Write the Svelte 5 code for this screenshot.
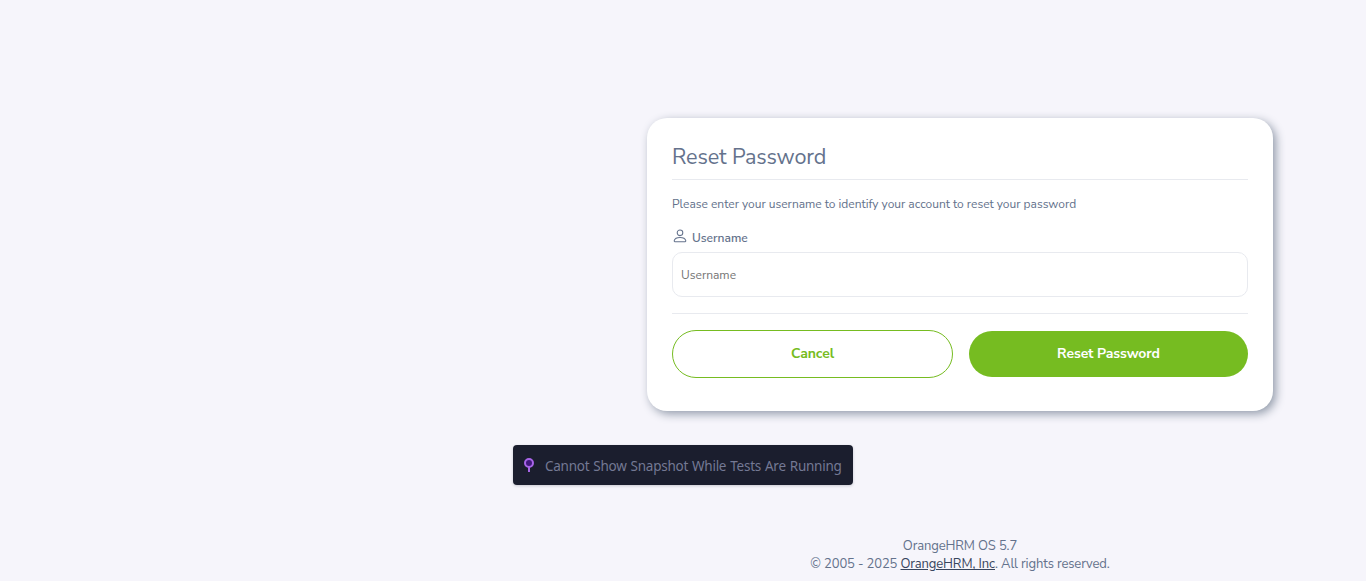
<script>
  let username = $state('');
</script>

<main class="page">
  <section class="card">
    <h1>Reset Password</h1>
    <form onsubmit={(e) => e.preventDefault()}>
      <p class="note">Please enter your username to identify your account to reset your password</p>
      <label for="username">
        <svg width="14" height="14" viewBox="0 0 14 14" fill="none" stroke="#64728c" stroke-width="1.05">
          <circle cx="7" cy="3.8" r="2.8" />
          <path d="M1.9 12.7C1.3 12.7 1.1 12.2 1.3 11.4 1.8 9.3 3.8 8.4 7 8.4s5.2.9 5.7 3c.2.8 0 1.3-.6 1.3Z" />
        </svg>
        <span>Username</span>
      </label>
      <input id="username" placeholder="Username" bind:value={username} />
      <div class="actions">
        <button type="button" class="cancel">Cancel</button>
        <button type="submit" class="reset">Reset Password</button>
      </div>
    </form>
  </section>
  <footer>
    <p>OrangeHRM OS 5.7</p>
    <p>© 2005 - 2025 <a href="#home">OrangeHRM, Inc</a>. All rights reserved.</p>
  </footer>
  <div class="toast">
    <svg width="12" height="16" viewBox="0 0 12 16">
      <path d="M6 9v6" stroke="#a865e8" stroke-width="2" />
      <circle cx="6" cy="6" r="4" fill="#41187d" stroke="#a865e8" stroke-width="2" />
    </svg>
    <span>Cannot Show Snapshot While Tests Are Running</span>
  </div>
</main>

<style>
  :global(body) { background: #f6f5fb; }
  .page {
    box-sizing: border-box;
    height: 581px;
    padding: 118px 93px 0 647px;
    overflow: hidden;
    display: flex;
    flex-direction: column;
    font-family: "Nunito Sans", Nunito, "Open Sans", sans-serif;
    color: #64728c;
  }
  .card {
    box-sizing: border-box;
    width: 626px;
    height: 293px;
    padding: 24px 25px;
    border-radius: 20px;
    background: #fff;
    box-shadow: 3px 3px 10px #929baa;
  }
  h1 {
    box-sizing: border-box;
    height: 38px;
    margin: 0;
    border-bottom: 1px solid #e8eaef;
    font-size: 21.6px;
    font-weight: 400;
    letter-spacing: -0.13px;
    line-height: 30px;
  }
  .note { margin: 16px 0 0; font-size: 12px; line-height: 16px; letter-spacing: -0.015px; }
  label {
    display: flex;
    gap: 5px;
    height: 20px;
    margin-top: 17px;
    padding-left: 1px;
    font-size: 12px;
    font-weight: 600;
    line-height: 18px;
  }
  svg { flex-shrink: 0; }
  input {
    display: block;
    box-sizing: border-box;
    width: 576px;
    height: 45px;
    margin: 3px 0 16px;
    padding: 0 8px;
    border: 1px solid #e8eaef;
    border-radius: 10px;
    outline: 0;
    background: #fff;
    color: #64728c;
    font: 400 12px "Nunito Sans", Nunito, "Open Sans", sans-serif;
  }
  input::placeholder { color: #757575; opacity: 1; }
  .actions {
    display: flex;
    align-items: center;
    gap: 16px;
    padding-top: 16px;
    border-top: 1px solid #e8eaef;
  }
  button {
    box-sizing: border-box;
    padding: 0 0 2px;
    border-radius: 24px;
    font: 700 14px "Nunito Sans", Nunito, "Open Sans", sans-serif;
    letter-spacing: -0.1px;
  }
  .cancel { width: 281px; height: 48px; border: 1px solid #76bc21; background: #fff; color: #76bc21; }
  .reset { width: 279px; height: 46px; border: 0; background: #76bc21; color: #fff; }
  footer { margin-top: 126px; text-align: center; font-size: 13px; line-height: 18px; letter-spacing: -0.125px; }
  footer p { margin: 0; white-space: nowrap; }
  a { color: #38455d; text-decoration: underline; }
  .toast {
    position: absolute;
    left: 513px;
    top: 445px;
    box-sizing: border-box;
    display: flex;
    align-items: center;
    gap: 10px;
    width: 340px;
    height: 40px;
    padding: 0 0 0 10px;
    border-radius: 4px;
    background: #1b1e2e;
    color: #747994;
    box-shadow: 0 1px 3px #1b1e2e33;
    font: 13.5px "Segoe UI", "Noto Sans", "Open Sans", sans-serif;
    letter-spacing: -0.26px;
    word-spacing: 0.8px;
    white-space: nowrap;
  }
  .toast span { padding-top: 1px; }
</style>
